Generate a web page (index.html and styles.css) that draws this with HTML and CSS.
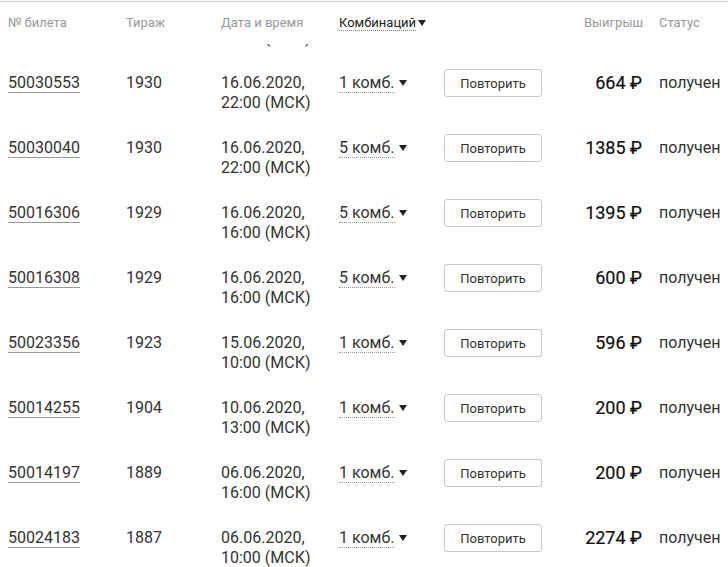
FILE: index.html
```html
<!DOCTYPE html>
<html lang="ru">
<head>
<meta charset="utf-8">
<link rel="stylesheet" href="styles.css">
</head>
<body>
<div class="page">
  <div class="head grid">
    <div>№ билета</div>
    <div>Тираж</div>
    <div>Дата и время</div>
    <div class="sort"><span class="dot">Комбинаций</span><span class="tri"></span></div>
    <div></div>
    <div class="right">Выигрыш</div>
    <div class="st">Статус</div>
  </div>
  <div class="clip">
    <div class="row grid shifted">
      <div></div>
      <div></div>
      <div>(МСК)<br>22:00 (МСК)</div>
    </div>
  </div>

  <div class="row grid">
    <div><span class="tn">50030553</span></div><div>1930</div><div>16.06.2020,<br>22:00 (МСК)</div>
    <div><span class="dot">1 комб.</span><span class="tri"></span></div>
    <div><button class="btn">Повторить</button></div><div class="amt">664 ₽</div><div class="st">получен</div>
  </div>
  <div class="row grid">
    <div><span class="tn">50030040</span></div><div>1930</div><div>16.06.2020,<br>22:00 (МСК)</div>
    <div><span class="dot">5 комб.</span><span class="tri"></span></div>
    <div><button class="btn">Повторить</button></div><div class="amt">1385 ₽</div><div class="st">получен</div>
  </div>
  <div class="row grid">
    <div><span class="tn">50016306</span></div><div>1929</div><div>16.06.2020,<br>16:00 (МСК)</div>
    <div><span class="dot">5 комб.</span><span class="tri"></span></div>
    <div><button class="btn">Повторить</button></div><div class="amt">1395 ₽</div><div class="st">получен</div>
  </div>
  <div class="row grid">
    <div><span class="tn">50016308</span></div><div>1929</div><div>16.06.2020,<br>16:00 (МСК)</div>
    <div><span class="dot">5 комб.</span><span class="tri"></span></div>
    <div><button class="btn">Повторить</button></div><div class="amt">600 ₽</div><div class="st">получен</div>
  </div>
  <div class="row grid">
    <div><span class="tn">50023356</span></div><div>1923</div><div>15.06.2020,<br>10:00 (МСК)</div>
    <div><span class="dot">1 комб.</span><span class="tri"></span></div>
    <div><button class="btn">Повторить</button></div><div class="amt">596 ₽</div><div class="st">получен</div>
  </div>
  <div class="row grid">
    <div><span class="tn">50014255</span></div><div>1904</div><div>10.06.2020,<br>13:00 (МСК)</div>
    <div><span class="dot">1 комб.</span><span class="tri"></span></div>
    <div><button class="btn">Повторить</button></div><div class="amt">200 ₽</div><div class="st">получен</div>
  </div>
  <div class="row grid">
    <div><span class="tn">50014197</span></div><div>1889</div><div>06.06.2020,<br>16:00 (МСК)</div>
    <div><span class="dot">1 комб.</span><span class="tri"></span></div>
    <div><button class="btn">Повторить</button></div><div class="amt">200 ₽</div><div class="st">получен</div>
  </div>
  <div class="row grid">
    <div><span class="tn">50024183</span></div><div>1887</div><div>06.06.2020,<br>10:00 (МСК)</div>
    <div><span class="dot">1 комб.</span><span class="tri"></span></div>
    <div><button class="btn">Повторить</button></div><div class="amt">2274 ₽</div><div class="st">получен</div>
  </div>
</div>
</body>
</html>
```

FILE: styles.css
```css
html, body {
  margin: 0;
  padding: 0;
  background: #fff;
  overflow: hidden;
}
body {
  padding-top: 1px;
  font-family: Roboto, "Noto Sans", Arial, sans-serif;
  color: #333;
}
.page {
  width: 728px;
  height: 566px;
  overflow: hidden;
}
.grid {
  display: grid;
  grid-template-columns: 118px 95px 118px 105px 98px 101px 85px;
  padding-left: 8px;
  align-items: start;
}
.head {
  border-top: 1px solid #d0d0d0;
  padding-top: 13px;
  height: 29px;
  font-size: 13px;
  line-height: 16px;
  color: #999;
  white-space: nowrap;
}
.head .sort {
  color: #222;
}
.head .dot {
  display: inline-block;
  line-height: 15px;
  border-bottom: 1px dotted #888;
}
.right {
  text-align: right;
}
.st {
  padding-left: 16px;
  white-space: nowrap;
}
.clip {
  height: 15px;
  overflow: hidden;
}
.shifted {
  margin-top: -50px;
}
.row {
  height: 65px;
  box-sizing: border-box;
  padding-top: 14px;
  font-size: 16px;
  line-height: 20px;
  color: #333;
}
.tn {
  display: inline-block;
  line-height: 18px;
  border-bottom: 1px solid #999;
}
.row .dot {
  display: inline-block;
  line-height: 18px;
  border-bottom: 1px dotted #999;
}
.tri {
  display: inline-block;
  width: 0;
  height: 0;
  border-left: 4px solid transparent;
  border-right: 4px solid transparent;
  border-top: 6px solid #222;
  margin-left: 4px;
  vertical-align: 2px;
}
.head .tri {
  margin-left: 2px;
  vertical-align: 1px;
}
.btn {
  display: block;
  box-sizing: border-box;
  width: 98px;
  height: 28px;
  margin-top: -4px;
  padding: 0;
  border: 1px solid #c8c8c8;
  border-radius: 3px;
  background: #fff;
  font-family: Roboto, "Noto Sans", Arial, sans-serif;
  font-size: 13px;
  color: #333;
}
.amt {
  text-align: right;
  padding-right: 1px;
  font-size: 18px;
  font-weight: 400;
  color: #111;
  -webkit-text-stroke: 0.2px #111;
  white-space: nowrap;
}
```
